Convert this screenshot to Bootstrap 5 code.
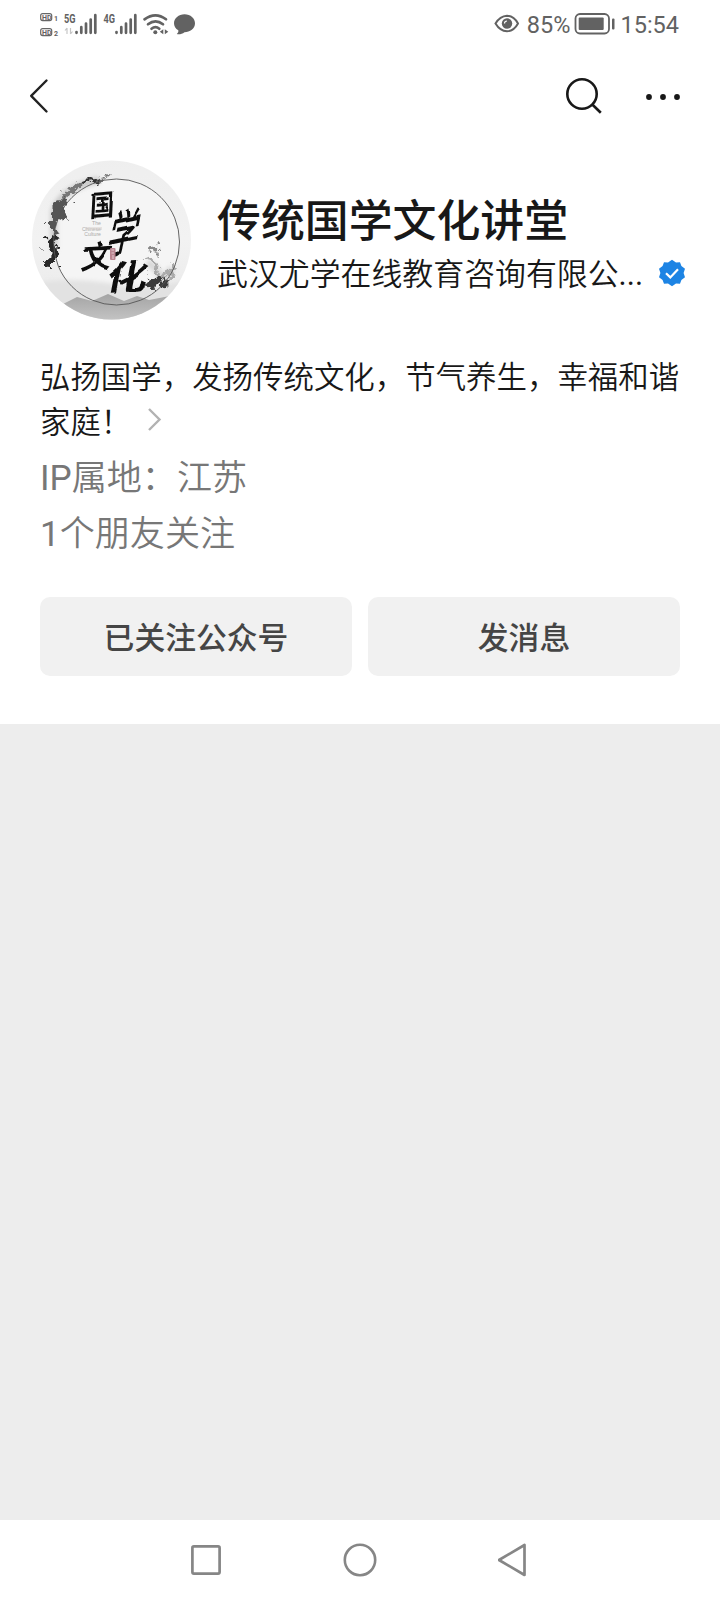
<!DOCTYPE html>
<html lang="zh-CN">
<head>
  <meta charset="UTF-8">
  <meta name="viewport" content="width=device-width, initial-scale=1">
  <title>传统国学文化讲堂</title>
  <link href="https://cdn.jsdelivr.net/npm/bootstrap@5.3.0/dist/css/bootstrap.min.css" rel="stylesheet">
  <style>
    body {
      background-color: #ededed;
      color: #181818;
      font-family: Roboto, "Noto Sans CJK SC", sans-serif;
      height: 1600px;
      overflow: hidden;
    }
    svg {
      display: block;
      flex: none;
    }
    .status-bar {
      height: 48px;
      padding: 0 41px 0 39px;
      color: #626262;
      font-size: 23.5px;
      line-height: 48px;
    }
    .percent,
    .clock {
      padding-top: 2px;
    }
    .top-bar {
      height: 96px;
      padding: 0 39px 0 28px;
    }
    .profile {
      height: 580px;
      padding: 12px 40px 0;
    }
    .profile-head {
      height: 168px;
      margin-left: -15px;
      margin-right: -6px;
    }
    .profile-name {
      font-size: 43.9px;
      line-height: 54px;
      font-weight: 500;
      margin: 39px 0 0 0;
    }
    .company {
      font-size: 30.9px;
      font-weight: 350;
      line-height: 46px;
      margin: 3px 0 0 0;
    }
    .company svg {
      margin-top: -5px;
    }
    .intro {
      font-family: "Noto Sans CJK SC", sans-serif;
      font-size: 30.45px;
      font-weight: 350;
      line-height: 44.5px;
      margin: 29px -4px 8px 0;
    }
    .meta-line {
      color: #777;
      font-size: 35.1px;
      font-weight: 350;
      line-height: 56px;
    }
    .actions {
      margin-top: 35px;
    }
    .btn-profile {
      --bs-btn-bg: #f1f1f1;
      --bs-btn-color: #454545;
      --bs-btn-hover-bg: #e6e6e6;
      --bs-btn-border-width: 0;
      --bs-btn-border-radius: 10px;
      height: 79px;
      font-size: 30.8px;
      font-weight: 500;
      padding-top: 12px;
    }
    .system-nav {
      height: 80px;
      padding: 0 190px;
    }
  </style>
</head>
<body class="d-flex flex-column">

<div class="status-bar bg-white d-flex align-items-center justify-content-between">
  <svg width="158" height="48" viewBox="39 0 158 48" fill="#626262">
    <g font-family="Roboto" font-weight="700">
      <rect x="40.7" y="13.6" width="11" height="7" rx="2" fill="none" stroke="#666" stroke-width="1.2"/>
      <text x="42" y="19.8" font-size="7">HD</text>
      <text x="54" y="21" font-size="7">1</text>
      <rect x="40.7" y="28.6" width="11" height="7" rx="2" fill="none" stroke="#666" stroke-width="1.2"/>
      <text x="42" y="34.8" font-size="7">HD</text>
      <text x="54" y="36" font-size="7">2</text>
      <text x="64" y="23" font-size="12.5" textLength="11.5" lengthAdjust="spacingAndGlyphs">5G</text>
      <text x="103.5" y="23" font-size="12.5" textLength="11.5" lengthAdjust="spacingAndGlyphs">4G</text>
    </g>
    <path d="M67 28v6M67 28l-2 2.500M70.500 28v6M70.500 34l2-2.500" fill="none" stroke="#c6c6c6" stroke-width="1.200"/>
    <path id="bars" d="M76.500 32v.800M81.300 27.200v5.600M86 23.500v9.300M90.700 19.500v13.300M95.300 15.200v17.600" stroke="#626262" stroke-width="2.700" stroke-linecap="round"/>
    <use href="#bars" x="40"/>
    <g fill="none" stroke="#626262" stroke-width="2.700" stroke-linecap="round">
      <path d="M144.500 19.300Q155.500 11.300 166 19.300M148 24.200Q155.500 18.500 163 24.200M151.500 28.700Q155.500 25.500 159.300 28.700"/>
    </g>
    <circle cx="155.300" cy="32.200" r="2"/>
    <path d="M163.300 29.200v5l-3.500-2.500zM164.800 29.200v5l3.500-2.500z"/>
    <path d="M184.500 14.200C190.600 14.200 195 18.200 195 23.200C195 28.700 190 32.200 184.500 32.200C182 34.200 179 34.500 176.800 34C178.200 33 178.600 31.500 178.300 30.300C175.500 28.700 174 26.200 174 23.300C174 18.200 178.700 14.200 184.500 14.200Z"/>
  </svg>
  <div class="d-flex align-items-center">
    <svg width="26" height="22" viewBox="0 0 26 22" fill="none" stroke="#626262" stroke-width="2">
      <path d="M2.500 10.500Q7 3 14 2.700Q21 3 25 10.500Q21 18 14 18.300Q7 18 2.500 10.500Z"/>
      <circle cx="14" cy="10.500" r="5.200" fill="#626262" stroke="none"/>
      <path d="M11.500 10.500Q11.500 8 14 8" stroke="#fff" stroke-width="1.200"/>
    </svg>
    <span class="ms-2 percent">85%</span>
    <svg class="ms-1" width="42" height="22" viewBox="0 0 42 22">
      <rect x="1.500" y="1" width="33.500" height="19.500" rx="4.500" fill="none" stroke="#626262" stroke-width="1.800"/>
      <rect x="4.700" y="4.500" width="25" height="12.500" rx="1" fill="#626262"/>
      <rect x="38" y="5.500" width="2.500" height="11" rx="1" fill="#626262"/>
    </svg>
    <span class="clock ms-1">15:54</span>
  </div>
</div>

<nav class="top-bar bg-white d-flex align-items-center justify-content-between">
  <svg width="22" height="36" viewBox="0 0 22 36" fill="none" stroke="#222" stroke-width="2.400" stroke-linecap="round" stroke-linejoin="round">
    <path d="M18.500 2.500L3.200 17.800L18.500 33.500"/>
  </svg>
  <svg width="116" height="38" viewBox="0 0 116 38">
    <g fill="none" stroke="#181818" stroke-width="2.600">
      <circle cx="17" cy="17" r="14.700"/>
      <path d="M27.300 27.500L35.800 35.700"/>
    </g>
    <g fill="#181818">
      <circle cx="84" cy="20" r="2.900"/>
      <circle cx="98" cy="20" r="2.900"/>
      <circle cx="112" cy="20" r="2.900"/>
    </g>
  </svg>
</nav>

<main class="profile bg-white">
  <header class="profile-head d-flex">
    <svg width="180" height="168" viewBox="0 6 180 168">
      <defs>
        <clipPath id="round"><circle cx="86.500" cy="90" r="79.500"/></clipPath>
        <linearGradient id="paper" x1="0" y1="0" x2="0" y2="1">
          <stop offset="0" stop-color="#eee"/>
          <stop offset=".5" stop-color="#f2f2f2"/>
          <stop offset=".76" stop-color="#ececec"/>
          <stop offset="1" stop-color="#cfcfcf"/>
        </linearGradient>
        <linearGradient id="hill" x1="0" y1="0" x2="0" y2="1">
          <stop offset="0" stop-color="#a4a4a4"/>
          <stop offset="1" stop-color="#cfcfcf"/>
        </linearGradient>
        <filter id="soft" x="-20%" y="-20%" width="140%" height="140%">
          <feGaussianBlur stdDeviation="2"/>
        </filter>
        <filter id="ink" x="-20%" y="-20%" width="140%" height="140%">
          <feTurbulence type="fractalNoise" baseFrequency=".1" numOctaves="4" seed="11"/>
          <feDisplacementMap in="SourceGraphic" scale="20" xChannelSelector="R" yChannelSelector="G"/>
          <feGaussianBlur stdDeviation=".6"/>
        </filter>
        <filter id="brush" x="-10%" y="-10%" width="120%" height="120%">
          <feTurbulence type="fractalNoise" baseFrequency=".06" numOctaves="1" seed="8"/>
          <feDisplacementMap in="SourceGraphic" scale="5" xChannelSelector="R" yChannelSelector="G"/>
          <feGaussianBlur stdDeviation=".35"/>
        </filter>
      </defs>
      <g clip-path="url(#round)">
        <rect width="180" height="180" fill="url(#paper)"/>
        <circle cx="91.500" cy="92" r="63" fill="#f5f5f5"/>
        <path d="M15 132Q50 127 90 134T160 130V160H15Z" fill="#e2e2e2" filter="url(#soft)"/>
        <path d="M30 158L52 147L67 151L83 144L99 151L112 146L124 150L150 145V180H20Z" fill="url(#hill)"/>
        <g filter="url(#soft)" fill="none" stroke="#aaa" stroke-width="7">
          <path d="M29 100V62Q36 38 74 30" opacity=".55"/>
          <path d="M122 112Q138 122 136 134L147 118" opacity=".4"/>
        </g>
        <g filter="url(#ink)">
          <path d="M32 48Q46 31 80 27L79 31Q60 32 48 42L36 52Z" fill="#777"/>
          <path d="M24 60L38 46L46 50L38 58L44 66L34 72L31 86L24 84Z" fill="#555"/>
          <path d="M54 33L76 28L70 32L58 36Z" fill="#333"/>
          <path d="M22 84L30 88L35 98L30 104L30 116L21 115Z" fill="#2c2c2c"/>
          <path d="M119 107L132 115L140 128L148 114L150 120L142 132L130 134L133 124L124 114Z" fill="#aaa"/>
          <path d="M124 128L142 127L138 137L130 140L121 136Z" fill="#3a3a3a"/>
          <path d="M126 97L132 98L133 103L128 102Z" fill="#888"/>
        </g>
        <circle cx="91.500" cy="92" r="63" fill="none" stroke="#555" stroke-width=".9"/>
        <g filter="url(#brush)" fill="#111" font-family="Noto Sans CJK SC" font-weight="700">
          <text transform="translate(64.500 67) rotate(-5) skewX(-8) scale(.88 1)" font-size="28">国</text>
          <text transform="translate(80 105) rotate(-12) skewX(-24) scale(.82 1.250)" font-size="38" font-weight="500">学</text>
          <text transform="translate(55 119) rotate(-3) skewX(-12) scale(1 1.050)" font-size="30">文</text>
          <text transform="translate(80 141) rotate(-3) skewX(-14) scale(1.200 1)" font-size="34">化</text>
        </g>
        <g fill="#aaa" font-family="Liberation Sans" font-size="5.200" text-anchor="end">
          <text x="76" y="75">The</text>
          <text x="76" y="80.500">Chinese</text>
          <text x="76" y="86">Culture</text>
        </g>
        <rect x="60" y="77" width="17" height="3" fill="#d8d0cc" opacity=".5"/>
        <rect x="85" y="98" width="5.500" height="12" rx="1" fill="#b98490"/>
        <path d="M86.500 100h2.500M86.500 103h2.500M88 105v4" stroke="#efdde1" stroke-width=".8"/>
      </g>
    </svg>
    <div class="flex-grow-1 ms-2 ps-1">
      <h1 class="profile-name">传统国学文化讲堂</h1>
      <div class="company d-flex align-items-center justify-content-between">
        <span>武汉尤学在线教育咨询有限公<span class="fw-normal">...</span></span>
        <svg width="28" height="28" viewBox="-14 -14 28 28">
          <path d="M0 -13.200L4 -10.600L8 -10.700L9.400 -7L13 -4.200L11.600 0L13 4.200L9.400 7L8 10.700L4 10.600L0 13.200L-4 10.600L-8 10.700L-9.400 7L-13 4.200L-11.600 0L-13 -4.200L-9.400 -7L-8 -10.700L-4 -10.600Z" fill="#1d84e4"/>
          <path d="M-6 .200L-1.700 4.400L6 -3.800" fill="none" stroke="#fff" stroke-width="2.200"/>
        </svg>
      </div>
    </div>
  </header>

  <div class="intro">
    弘扬国学，发扬传统文化，节气养生，幸福和谐
    <div class="d-flex align-items-center">
      <span class="intro-end">家庭！</span>
      <svg class="ms-3" width="16" height="24" viewBox="0 0 16 24" fill="none" stroke="#b2b2b2" stroke-width="2.400">
        <path d="M2 1L12.500 11.500L2 22"/>
      </svg>
    </div>
  </div>
  <div class="meta-line"><span class="fw-normal">IP</span>属地：江苏</div>
  <div class="meta-line"><span class="fw-normal">1</span>个朋友关注</div>

  <div class="row gx-3 actions">
    <div class="col-6"><button type="button" class="btn btn-profile w-100">已关注公众号</button></div>
    <div class="col-6"><button type="button" class="btn btn-profile w-100">发消息</button></div>
  </div>
</main>

<section class="flex-grow-1"></section>

<footer class="system-nav bg-white d-flex align-items-center justify-content-between">
  <svg width="32" height="32" viewBox="0 0 32 32" fill="none" stroke="#868686" stroke-width="2.700">
    <rect x="2.400" y="2.400" width="27.200" height="27.200" rx="1.500"/>
  </svg>
  <svg width="34" height="34" viewBox="0 0 34 34" fill="none" stroke="#868686" stroke-width="2.600">
    <circle cx="17" cy="17" r="15.200"/>
  </svg>
  <svg width="32" height="34" viewBox="0 0 32 34" fill="none" stroke="#868686" stroke-width="2.700" stroke-linejoin="round">
    <path d="M26.500 2V32L1 17Z"/>
  </svg>
</footer>

<script src="https://cdn.jsdelivr.net/npm/bootstrap@5.3.0/dist/js/bootstrap.bundle.min.js"></script>
</body>
</html>
